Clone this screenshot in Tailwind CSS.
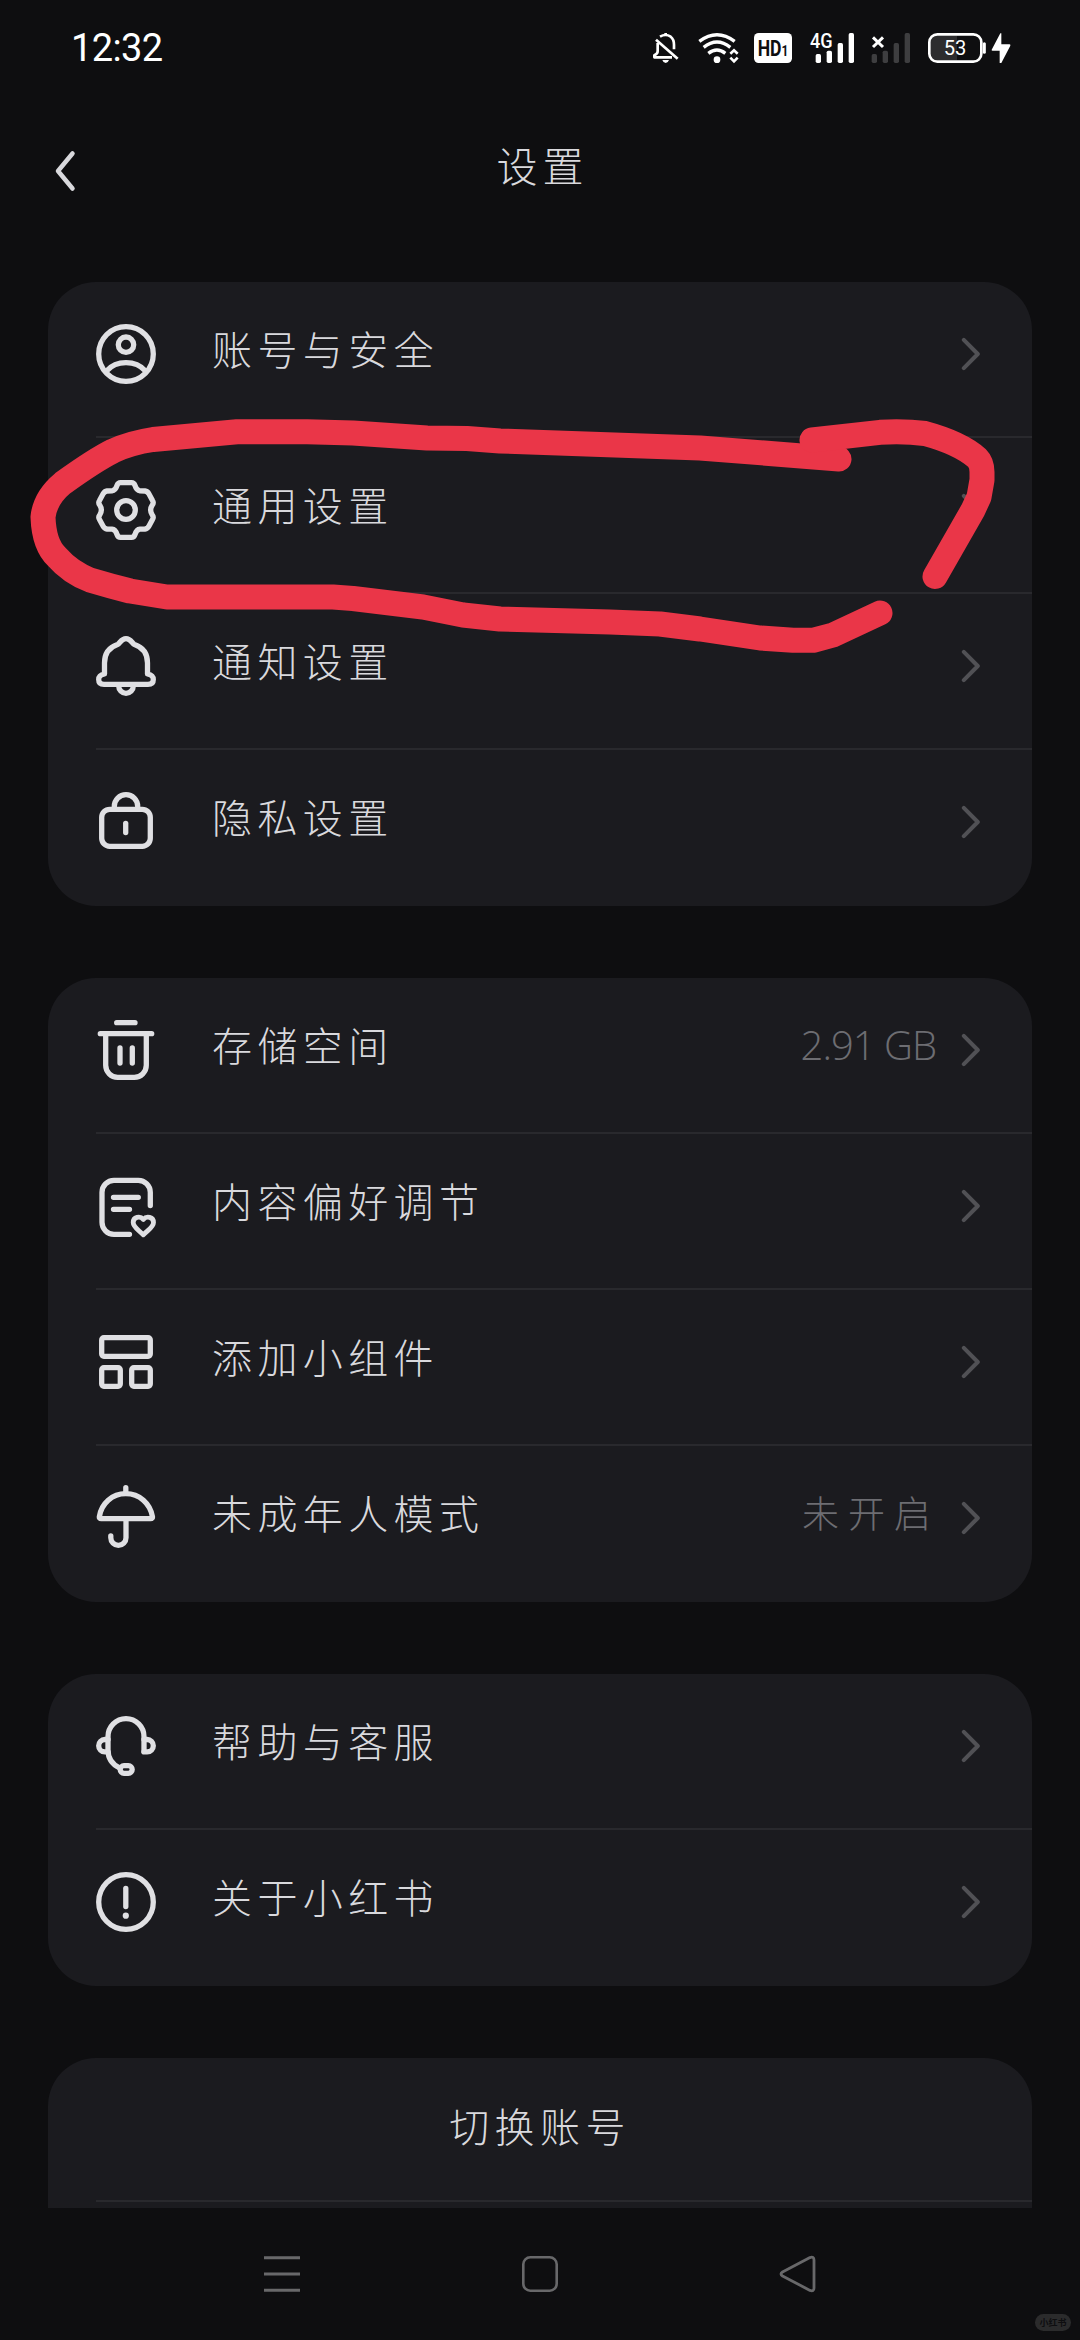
<!DOCTYPE html>
<html lang="zh-CN">
<head>
<meta charset="utf-8">
<title>设置</title>
<script src="https://cdn.jsdelivr.net/npm/@tailwindcss/browser@4"></script>
</head>
<body class="bg-[#0e0e10]">
<svg class="hidden">
  <symbol id="chev" viewBox="0 0 20 34"><path d="M2.8 2.8 L16.8 17 L2.8 31.2" fill="none" stroke="#515155" stroke-width="4" stroke-linecap="round" stroke-linejoin="round"/></symbol>
</svg>
<div class="relative flex h-[2340px] w-[1080px] flex-col overflow-hidden bg-[#0e0e10] font-['Noto_Sans_CJK_SC',sans-serif] font-light text-[#d9d9dd]">

  <!-- status bar -->
  <header class="flex h-24 shrink-0 items-center pl-[71px]">
    <div class="w-[575px] font-['Roboto',sans-serif] text-[38px] leading-none font-normal tracking-[-0.6px] text-white">12:32</div>
    <svg class="h-20 w-[400px] shrink-0 -translate-x-[6px] translate-y-[2px]" viewBox="0 0 1200 240" fill="none">
      <g stroke="#fff" stroke-width="8" stroke-linejoin="round">
        <path d="M60 80 Q77 70 92 80 Q102 88 102 104 V118"/>
        <path d="M53 99 V124 Q53 132 43 136 V142 H96"/>
        <path d="M48 89 L113 146"/>
        <path d="M77 69 V76"/>
      </g>
      <path d="M67 150 H87 Q84 159 77 159 Q70 159 67 150Z" fill="#fff"/>
      <g stroke="#fff" stroke-width="10">
        <path d="M178 94 Q231 54 284 94"/>
        <path d="M191 112 Q231 80 271 112"/>
        <path d="M205 130 Q231 110 256 130"/>
      </g>
      <circle cx="231" cy="149" r="10" fill="#fff"/>
      <path d="M271 131 L282 121 L293 131 M271 143 L282 154 L293 143" stroke="#fff" stroke-width="8"/>
      <rect x="342" y="69" width="114" height="90" rx="14" fill="#fff"/>
      <text x="353" y="138" font-family="Roboto" font-weight="700" font-size="65" textLength="92" lengthAdjust="spacingAndGlyphs" fill="#0e0e10">HD<tspan font-size="44">1</tspan></text>
      <text x="510" y="113" font-family="Roboto" font-weight="500" font-size="60" textLength="68" lengthAdjust="spacingAndGlyphs" fill="#fff">4G</text>
      <g fill="#fff"><rect x="527" y="132" width="16" height="27" rx="5"/><rect x="560" y="122" width="16" height="37" rx="5"/><rect x="593" y="99" width="16" height="60" rx="5"/><rect x="626" y="69" width="16" height="90" rx="5"/></g>
      <g fill="#3e3e40"><rect x="695" y="132" width="16" height="27" rx="5"/><rect x="728" y="122" width="16" height="37" rx="5"/><rect x="761" y="99" width="16" height="60" rx="5"/><rect x="794" y="69" width="16" height="90" rx="5"/></g>
      <path d="M699 82 L729 111 M729 82 L699 111" stroke="#fff" stroke-width="9"/>
      <path d="M890 77 H951 V151 H890 Q872 151 872 132 V96 Q872 77 890 77Z" fill="#2c2c2e"/>
      <rect x="868" y="73" width="156" height="82" rx="24" stroke="#fff" stroke-width="8"/>
      <path d="M1033 101 V127" stroke="#fff" stroke-width="9" stroke-linecap="round"/>
      <text x="911" y="135" font-family="Roboto" font-weight="400" font-size="62" textLength="68" lengthAdjust="spacingAndGlyphs" fill="#fff">53</text>
      <path d="M1081 70 L1055 119 Q1054 122 1058 122 H1079 V159 H1084 L1111 107 Q1112 103 1108 103 H1084 V70Z" fill="#fff"/>
    </svg>
  </header>

  <!-- title bar -->
  <div class="grid h-[150px] shrink-0 grid-cols-3 items-center px-[52px]">
    <svg class="h-12 w-7" viewBox="0 0 28 48" fill="none"><path d="M20.5 6.5 L6 24 L20.5 41.5" stroke="#d9d9dd" stroke-width="4.5" stroke-linecap="round" stroke-linejoin="round"/></svg>
    <h1 class="pb-[13px] pl-[5px] text-center text-[41px] leading-none tracking-[5px]">设置</h1>
  </div>

  <main class="mt-9 flex h-[1926px] shrink-0 flex-col gap-[72px] overflow-hidden px-12">

    <section class="h-[624px] shrink-0 rounded-[48px] bg-[#1b1b1f] pl-12">
      <div class="flex h-[156px] items-center border-b-2 border-[#29292d] pr-[51px] pb-[10px]">
        <svg class="size-[60px] overflow-visible" viewBox="0 0 60 60" fill="none" stroke="#e0e0e3" stroke-width="5.3"><circle cx="30" cy="30" r="27.3"/><circle cx="30" cy="20.7" r="7.7"/><path d="M10.5 47 Q18 38.7 30 38.7 T49.5 47"/></svg>
        <span class="ml-14 flex-1 pb-3 text-[40px] leading-none tracking-[5.4px]">账号与安全</span>
        <svg class="h-[34px] w-5"><use href="#chev"/></svg>
      </div>
      <div class="flex h-[156px] items-center border-b-2 border-[#29292d] pr-[51px] pb-[10px]">
        <svg class="size-[60px] overflow-visible" viewBox="0 0 60 60" fill="none" stroke="#e0e0e3" stroke-width="5.3" stroke-linejoin="round"><path d="M24.5 2.7 H35.5 Q38 2.7 39 5.5 Q40.5 10.5 44 10.8 L49 11 Q51.5 11.3 53 14 L56.5 20.5 Q58 23 56.3 25 Q53 30 56.3 35 Q58 37 56.5 39.5 L53 46 Q51.5 48.7 49 49 L44 49.2 Q40.5 49.5 39 54.5 Q38 57.3 35.5 57.3 H24.5 Q22 57.3 21 54.5 Q19.5 49.5 16 49.2 L11 49 Q8.5 48.7 7 46 L3.5 39.5 Q2 37 3.7 35 Q7 30 3.7 25 Q2 23 3.5 20.5 L7 14 Q8.5 11.3 11 11 L16 10.8 Q19.5 10.5 21 5.5 Q22 2.7 24.5 2.7Z"/><circle cx="30" cy="30" r="9.3"/></svg>
        <span class="ml-14 flex-1 pb-3 text-[40px] leading-none tracking-[5.4px]">通用设置</span>
        <svg class="h-[34px] w-5"><use href="#chev"/></svg>
      </div>
      <div class="flex h-[156px] items-center border-b-2 border-[#29292d] pr-[51px] pb-[10px]">
        <svg class="size-[60px] overflow-visible" viewBox="0 0 60 60" fill="none" stroke="#e0e0e3" stroke-width="5.3" stroke-linejoin="round"><path d="M8.5 38 V27 C8.5 17 14 11 21.5 8.5 C24 7.5 25 2.7 30 2.7 C35 2.7 36 7.5 38.5 8.5 C46 11 51.5 17 51.5 27 V38 Q57.3 39 57.3 43.5 Q57.3 48.4 52 48.4 H8 Q2.7 48.4 2.7 43.5 Q2.7 39 8.5 38Z"/><path d="M22.7 50 a7.3 7.3 0 0 0 14.6 0"/></svg>
        <span class="ml-14 flex-1 pb-3 text-[40px] leading-none tracking-[5.4px]">通知设置</span>
        <svg class="h-[34px] w-5"><use href="#chev"/></svg>
      </div>
      <div class="flex h-[156px] items-center pr-[51px] pb-3">
        <svg class="size-[60px] overflow-visible" viewBox="0 0 60 60" fill="none" stroke="#e0e0e3" stroke-width="5.3" stroke-linecap="round"><rect x="5.7" y="17.3" width="48.6" height="37" rx="8"/><path d="M18.3 16 V14.4 a11.7 11.7 0 0 1 23.4 0 V16"/><path d="M29.7 31.3 V40.5"/></svg>
        <span class="ml-14 flex-1 pb-3 text-[40px] leading-none tracking-[5.4px]">隐私设置</span>
        <svg class="h-[34px] w-5"><use href="#chev"/></svg>
      </div>
    </section>

    <section class="h-[624px] shrink-0 rounded-[48px] bg-[#1b1b1f] pl-12">
      <div class="flex h-[156px] items-center border-b-2 border-[#29292d] pr-[51px] pb-[10px]">
        <svg class="size-[60px] overflow-visible" viewBox="0 0 60 60" fill="none" stroke="#e0e0e3" stroke-width="5.3" stroke-linecap="round"><path d="M20.7 2.7 H39 M4.3 13.7 H55.7 M9.7 14 V45.3 a12 12 0 0 0 12 12 H38.3 a12 12 0 0 0 12 -12 V14 M24 28 V43 M36.3 28 V43"/></svg>
        <span class="ml-14 flex-1 pb-3 text-[40px] leading-none tracking-[5.4px]">存储空间</span>
        <span class="mr-[25px] pb-[10px] font-['Open_Sans',sans-serif] text-[40px] leading-none font-[360] tracking-[-1px] text-[#6d6d72]">2.91 GB</span>
        <svg class="h-[34px] w-5"><use href="#chev"/></svg>
      </div>
      <div class="flex h-[156px] items-center border-b-2 border-[#29292d] pr-[51px] pb-[10px]">
        <svg class="size-[60px] overflow-visible" viewBox="0 0 60 60" fill="none" stroke="#e0e0e3" stroke-width="5.3" stroke-linecap="round" stroke-linejoin="round"><path d="M54.3 29.5 V16.3 a12 12 0 0 0 -12 -12 H18 a12 12 0 0 0 -12 12 V46.3 a12 12 0 0 0 12 12 H33.5 M17.5 21.3 H42.3 M17.5 33.3 H33.5"/><path stroke-width="4.8" d="M47.3 43.5 C44 39.5 37.2 41 37.2 46.5 C37.2 51 42 53.5 47.3 58.8 C52.6 53.5 57.5 51 57.5 46.5 C57.5 41 50.6 39.5 47.3 43.5Z"/></svg>
        <span class="ml-14 flex-1 pb-3 text-[40px] leading-none tracking-[5.4px]">内容偏好调节</span>
        <svg class="h-[34px] w-5"><use href="#chev"/></svg>
      </div>
      <div class="flex h-[156px] items-center border-b-2 border-[#29292d] pr-[51px] pb-[10px]">
        <svg class="size-[60px] overflow-visible" viewBox="0 0 60 60" fill="none" stroke="#e0e0e3" stroke-width="5.3"><rect x="5.7" y="5.7" width="48.6" height="18.6" rx="2.2"/><rect x="5.7" y="35.7" width="18.6" height="18.6" rx="2.2"/><rect x="35.7" y="35.7" width="18.6" height="18.6" rx="2.2"/></svg>
        <span class="ml-14 flex-1 pb-3 text-[40px] leading-none tracking-[5.4px]">添加小组件</span>
        <svg class="h-[34px] w-5"><use href="#chev"/></svg>
      </div>
      <div class="flex h-[156px] items-center pr-[51px] pb-3">
        <svg class="size-[60px] overflow-visible" viewBox="0 0 60 60" fill="none" stroke="#e0e0e3" stroke-width="5.3" stroke-linecap="round" stroke-linejoin="round"><path d="M29.8 -0.4 V5 M5.2 30.7 Q3 30.7 3.4 28.5 C5.5 15.5 16 5.7 29.8 5.7 C43.6 5.7 54.1 15.5 56.4 28.5 Q56.8 30.7 54.6 30.7 Z M30 31 V49.7 A7.6 7.6 0 0 1 14.8 49.7 V47.8"/></svg>
        <span class="ml-14 flex-1 pb-3 text-[40px] leading-none tracking-[5.4px]">未成年人模式</span>
        <span class="mr-[21px] pb-3 text-[37px] leading-none tracking-[9px] text-[#6d6d72]">未开启</span>
        <svg class="h-[34px] w-5"><use href="#chev"/></svg>
      </div>
    </section>

    <section class="h-[312px] shrink-0 rounded-[48px] bg-[#1b1b1f] pl-12">
      <div class="flex h-[156px] items-center border-b-2 border-[#29292d] pr-[51px] pb-[10px]">
        <svg class="size-[60px] overflow-visible" viewBox="0 0 60 60" fill="none" stroke="#e0e0e3" stroke-width="5.3" stroke-linecap="round" stroke-linejoin="round"><path d="M48 35.4 V20.7 A18 18 0 0 0 12 20.7 V34 C12 42 16.5 48.5 23.5 51.8"/><path d="M12 23.5 H8.9 a6.2 6.2 0 0 0 0 12.4 H12 M48 23.5 H51.1 a6.2 6.2 0 0 1 0 12.4 H48"/><rect x="24.2" y="49.7" width="12" height="7.6" rx="3.8"/></svg>
        <span class="ml-14 flex-1 pb-3 text-[40px] leading-none tracking-[5.4px]">帮助与客服</span>
        <svg class="h-[34px] w-5"><use href="#chev"/></svg>
      </div>
      <div class="flex h-[156px] items-center pr-[51px] pb-3">
        <svg class="size-[60px] overflow-visible" viewBox="0 0 60 60" fill="none" stroke="#e0e0e3" stroke-width="5.3" stroke-linecap="round"><circle cx="30" cy="30" r="27.3"/><path d="M29.8 16.5 V34.5"/><circle cx="29.8" cy="43.7" r="3.1" fill="#e0e0e3" stroke="none"/></svg>
        <span class="ml-14 flex-1 pb-3 text-[40px] leading-none tracking-[5.4px]">关于小红书</span>
        <svg class="h-[34px] w-5"><use href="#chev"/></svg>
      </div>
    </section>

    <section class="h-[312px] shrink-0 rounded-[48px] bg-[#1b1b1f] pl-12">
      <div class="flex h-36 items-center justify-center border-b-2 border-[#29292d] pr-12">
        <span class="pb-2 text-[40px] leading-none tracking-[5.4px]">切换账号</span>
      </div>
    </section>
  </main>

  <!-- system navigation -->
  <nav class="flex h-[132px] shrink-0 items-center justify-between px-[262px]">
    <svg class="size-10" viewBox="0 0 40 40" fill="none" stroke="#68686a" stroke-width="3"><path d="M2 3.7 H38 M2 20 H38 M2 36.3 H38"/></svg>
    <svg class="size-10" viewBox="0 0 40 40" fill="none" stroke="#68686a" stroke-width="2.6"><rect x="3.3" y="3.3" width="33.4" height="33.4" rx="7"/></svg>
    <svg class="size-10" viewBox="0 0 40 40" fill="none" stroke="#68686a" stroke-width="2.8" stroke-linejoin="round"><path d="M4.5 18 L32 3.6 Q36 2.2 36 6 V34 Q36 37.8 32 36.4 L4.5 22 Q1.5 20 4.5 18Z"/></svg>
  </nav>

  <!-- hand-drawn mark -->
  <svg class="absolute inset-0 h-full w-full" viewBox="0 0 1080 2340" fill="none" stroke="#ea3648" stroke-width="25" stroke-linecap="round" stroke-linejoin="round">
    <path d="M839 459 L700 448 L500 441 L467 438.5 L427 438 L353 433 L307 431.8 H237 L153 439.5 Q130 443 113 451 Q95 460 63 483 Q45 498 43 517 Q44 545 57 557 Q70 572 90 580 Q110 586 130 591 L167 597 H333 L353 598.5 L423 607 L463 615 L500 619 L610 622 L660 624 L700 629 L760 638 L793 640.3 H813 L833 635 L880 613"/>
    <path d="M812 440 L880 432.3 Q905 431 925 433.5 Q960 443 977 458 Q982 463 982 472 V480 L979 497 L973 510 L935 576.5"/>
  </svg>

  <!-- watermark -->
  <div class="absolute right-[9px] bottom-[9px] flex h-[17px] w-9 items-center justify-center rounded-full bg-[#2b2b2c] text-[9px] leading-none font-bold text-[#0e0e10]">小红书</div>
</div>
</body>
</html>
